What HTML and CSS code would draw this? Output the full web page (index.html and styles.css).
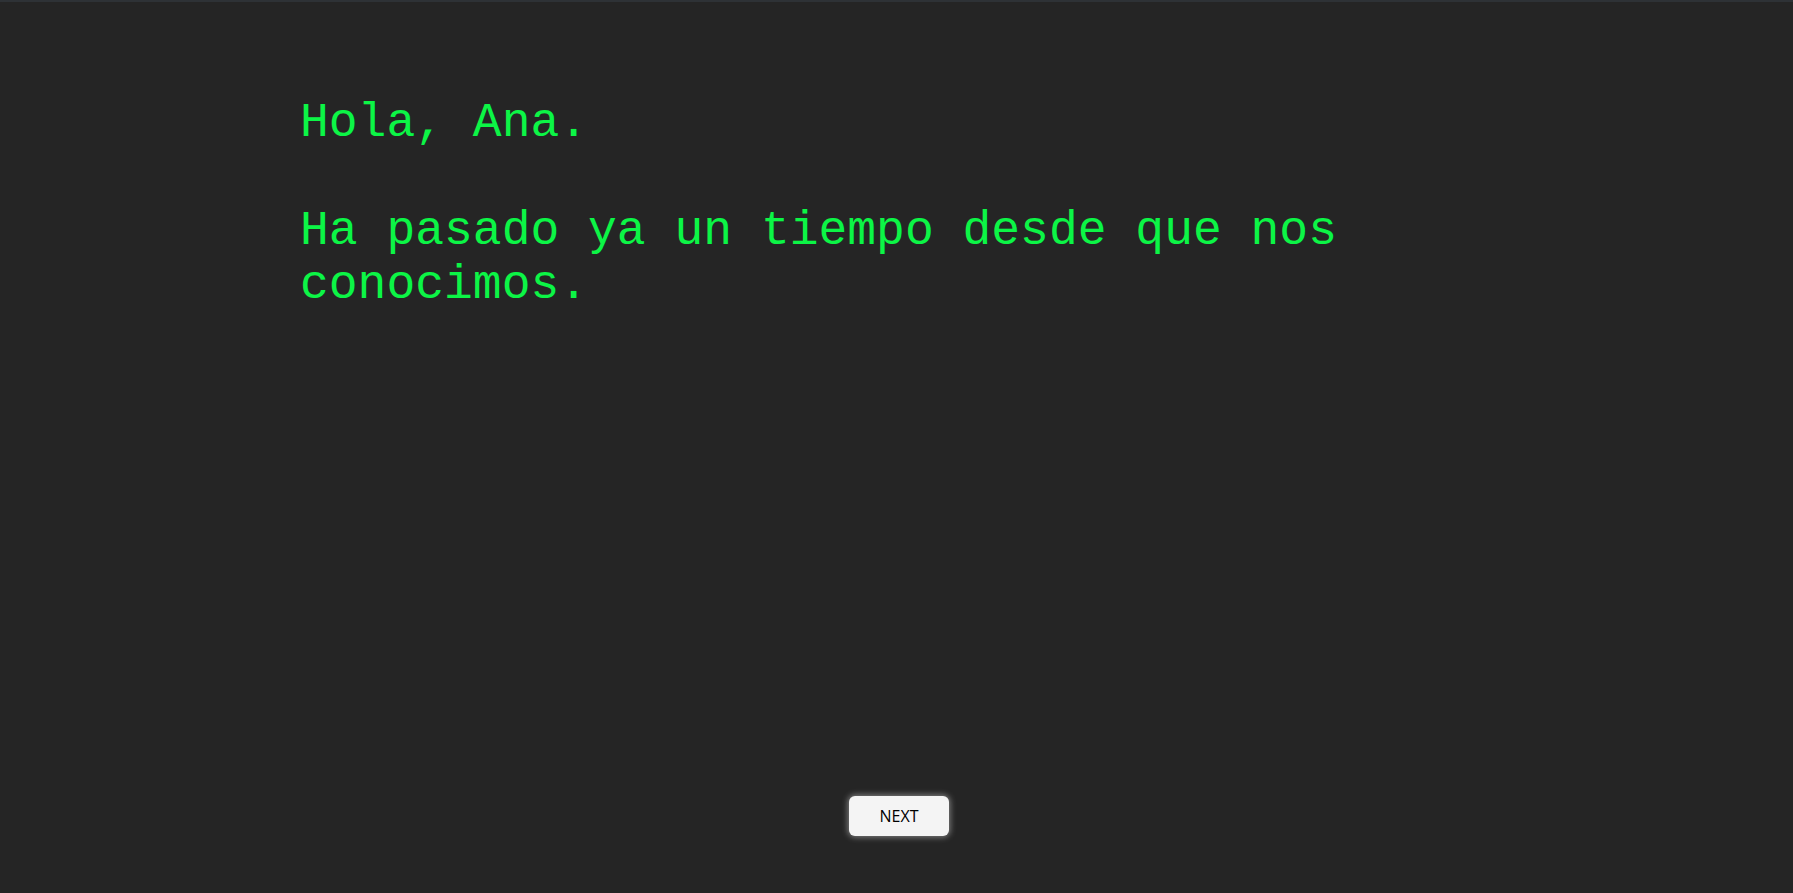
FILE: index.html
```html
<!DOCTYPE html>
<html lang="es">
<head>
<meta charset="utf-8">
<title>Hola</title>
<link rel="stylesheet" href="styles.css">
</head>
<body>
<div class="screen">
  <main class="story">
    <p class="line">Hola, Ana.</p>
    <p class="line">Ha pasado ya un tiempo desde que nos conocimos.</p>
  </main>
  <div class="controls">
    <button class="next-btn" type="button">NEXT</button>
  </div>
</div>
</body>
</html>
```
FILE: styles.css
```css
html, body {
  margin: 0;
  padding: 0;
  height: 100%;
  background: #252525;
}
.screen {
  box-sizing: border-box;
  height: 893px;
  border-top: 2px solid #2e3236;
  display: flex;
  flex-direction: column;
  overflow: hidden;
}
.story {
  width: 1193px;
  margin: 0 auto;
  padding-top: 94px;
  font-family: "Liberation Mono", "Courier New", monospace;
  font-size: 48px;
  line-height: 54px;
  color: #0cf546;
}
.line {
  margin: 0 0 54px 0;
}
.controls {
  margin-top: auto;
  padding-bottom: 57px;
  display: flex;
  justify-content: center;
  padding-left: 5px;
}
.next-btn {
  width: 100px;
  height: 40px;
  border: none;
  border-radius: 6px;
  background: #f4f4f4;
  color: #000;
  font-family: "Open Sans", sans-serif;
  font-size: 16px;
  box-shadow: 0 0 6px 1px rgba(255, 255, 255, 0.45);
  cursor: pointer;
}
```
